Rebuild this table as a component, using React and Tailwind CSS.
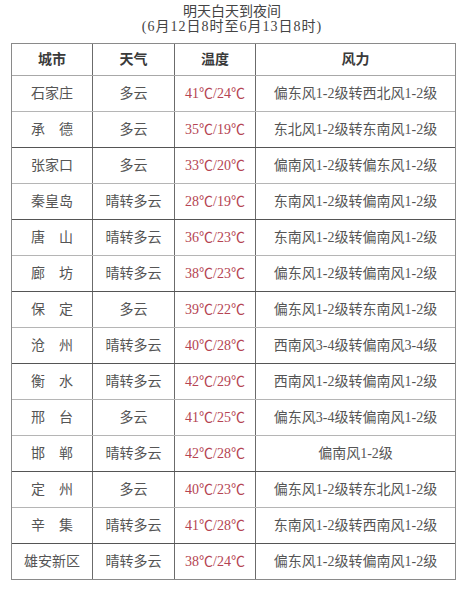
import React from "react";

const rows = [
  ["石家庄", "多云", "41℃/24℃", "偏东风1-2级转西北风1-2级", "light"],
  ["承　德", "多云", "35℃/19℃", "东北风1-2级转东南风1-2级", "dark"],
  ["张家口", "多云", "33℃/20℃", "偏南风1-2级转偏东风1-2级", "light"],
  ["秦皇岛", "晴转多云", "28℃/19℃", "东南风1-2级转偏南风1-2级", "dark"],
  ["唐　山", "晴转多云", "36℃/23℃", "东南风1-2级转偏南风1-2级", "light"],
  ["廊　坊", "晴转多云", "38℃/23℃", "偏东风1-2级转偏南风1-2级", "dark"],
  ["保　定", "多云", "39℃/22℃", "偏东风1-2级转东南风1-2级", "light"],
  ["沧　州", "晴转多云", "40℃/28℃", "西南风3-4级转偏南风3-4级", "dark"],
  ["衡　水", "晴转多云", "42℃/29℃", "西南风1-2级转偏南风1-2级", "light"],
  ["邢　台", "多云", "41℃/25℃", "偏东风3-4级转偏南风1-2级", "light"],
  ["邯　郸", "晴转多云", "42℃/28℃", "偏南风1-2级", "dark"],
  ["定　州", "多云", "40℃/23℃", "偏东风1-2级转东北风1-2级", "light"],
  ["辛　集", "晴转多云", "41℃/28℃", "东南风1-2级转西南风1-2级", "dark"],
  ["雄安新区", "晴转多云", "38℃/24℃", "偏东风1-2级转偏南风1-2级", "none"],
];

const cell = "flex items-center justify-center border-r border-[#6b6b6b]";

export default function App() {
  return (
    <div
      className="w-[464px] h-[600px] bg-white text-[14px] text-[#555]"
      style={{ fontFamily: '"Liberation Serif", "Noto Sans CJK SC", serif' }}
    >
      <div className="pt-[4px] text-center leading-[15px] text-[#444]">
        <div>明天白天到夜间</div>
        <div className="tracking-[1px]">(6月12日8时至6月13日8时)</div>
      </div>

      <div className="mt-[9px] ml-[11px] w-[445px] border border-[#8a8a8a]">
        <div className="grid grid-cols-[81px_82px_81px_1fr] h-[32px] border-b border-[#a8a8a8] font-bold text-[#3a3a3a]">
          <div className={cell}>城市</div>
          <div className={cell}>天气</div>
          <div className={cell}>温度</div>
          <div className="flex items-center justify-center">风力</div>
        </div>

        {rows.map(([city, weather, temp, wind, line]) => (
          <div
            key={city}
            className={
              "grid grid-cols-[81px_82px_81px_1fr] " +
              (line === "none"
                ? "h-[35px]"
                : line === "dark"
                ? "h-[36px] border-b border-[#555]"
                : "h-[36px] border-b border-[#b5b5b5]")
            }
          >
            <div className={cell + " whitespace-pre"}>{city}</div>
            <div className={cell}>{weather}</div>
            <div className={cell + " text-[#b54452]"}>{temp}</div>
            <div className="flex items-center justify-center">{wind}</div>
          </div>
        ))}
      </div>
    </div>
  );
}
